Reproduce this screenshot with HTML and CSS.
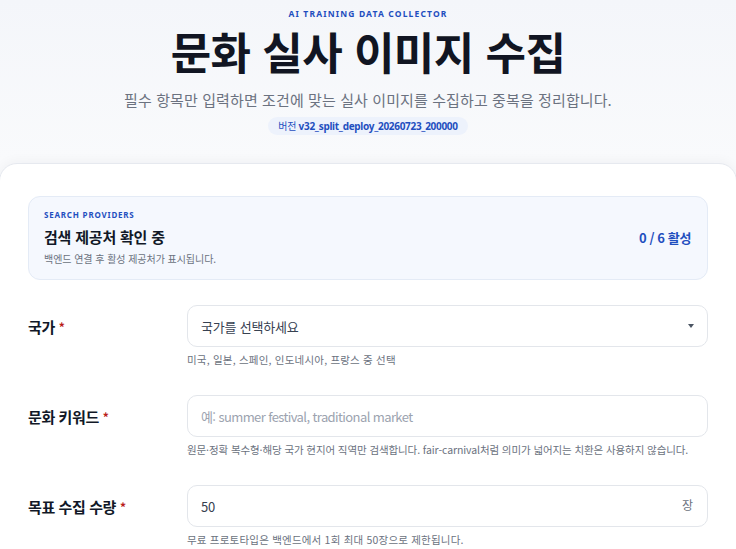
FILE: index.html
```html
<!DOCTYPE html>
<html lang="ko">
<head>
    <meta charset="UTF-8">
    <meta name="viewport" content="width=device-width, initial-scale=1.0">
    <title>문화 실사 이미지 수집</title>
    <link rel="stylesheet" href="styles.css">
</head>
<body>
    <header class="hero">
        <p class="eyebrow">AI TRAINING DATA COLLECTOR</p>
        <h1 class="hero_title">문화 실사 이미지 수집</h1>
        <p class="hero_sub">필수 항목만 입력하면 조건에 맞는 실사 이미지를 수집하고 중복을 정리합니다.</p>
        <span class="version">버전 <b>v32_split_deploy_20260723_200000</b></span>
    </header>

    <main class="panel">
        <section class="providers">
            <div class="providers_text">
                <p class="providers_kicker">SEARCH PROVIDERS</p>
                <h2 class="providers_title">검색 제공처 확인 중</h2>
                <p class="providers_note">백엔드 연결 후 활성 제공처가 표시됩니다.</p>
            </div>
            <span class="providers_count">0 / 6 활성</span>
        </section>

        <form id="collectForm" class="form">
            <div class="row">
                <label class="row_label" for="country">국가<span class="req">*</span></label>
                <div class="row_field">
                    <div class="select_wrap">
                        <select id="country" name="country" class="control">
                            <option value="">국가를 선택하세요</option>
                            <option value="us">미국</option>
                            <option value="jp">일본</option>
                            <option value="es">스페인</option>
                            <option value="id">인도네시아</option>
                            <option value="fr">프랑스</option>
                        </select>
                        <span class="caret"></span>
                    </div>
                    <p class="hint">미국, 일본, 스페인, 인도네시아, 프랑스 중 선택</p>
                </div>
            </div>

            <div class="row">
                <label class="row_label" for="keyword">문화 키워드<span class="req">*</span></label>
                <div class="row_field">
                    <input type="text" id="keyword" name="keyword" class="control latin" placeholder="예: summer festival, traditional market">
                    <p class="hint hint_long">원문·정확 복수형·해당 국가 현지어 직역만 검색합니다. fair-carnival처럼 의미가 넓어지는 치환은 사용하지 않습니다.</p>
                </div>
            </div>

            <div class="row">
                <label class="row_label" for="count">목표 수집 수량<span class="req">*</span></label>
                <div class="row_field">
                    <div class="unit_wrap">
                        <input type="text" id="count" name="count" class="control" value="50">
                        <span class="unit">장</span>
                    </div>
                    <p class="hint">무료 프로토타입은 백엔드에서 1회 최대 50장으로 제한됩니다.</p>
                </div>
            </div>
        </form>
    </main>
</body>
</html>
```
FILE: styles.css
```css
body{
    margin: 0;
    font-family: "Noto Sans CJK KR", "Noto Sans", sans-serif;
    background: linear-gradient(180deg, #f4f6fa 0%, #f9fafc 160px, #ffffff 100%);
    color: #111827;
}
p{
    margin: 0;
}

/* header */
.hero{
    display: flex;
    flex-direction: column;
    align-items: center;
    padding-top: 9px;
    height: 155px;
    box-sizing: border-box;
}
.eyebrow{
    font-family: "Noto Sans", sans-serif;
    font-size: 8.5px;
    font-weight: 700;
    letter-spacing: 1.15px;
    color: #1f4fbf;
    line-height: 10px;
}
.hero_title{
    margin: 8px 0 0;
    font-size: 44px;
    font-weight: 700;
    letter-spacing: -0.55px;
    line-height: 48px;
    color: #111522;
}
.hero_sub{
    margin-top: 14px;
    font-size: 15px;
    letter-spacing: 0.1px;
    color: #6b7280;
    line-height: 22px;
}
.version{
    margin-top: 6px;
    padding: 1px 10px;
    border-radius: 10px;
    background: #edf2fc;
    color: #1f4fbf;
    font-size: 10px;
    letter-spacing: -0.3px;
    line-height: 15px;
}
.version b{
    font-family: "Noto Sans", sans-serif;
    font-weight: 700;
}

/* main card */
.panel{
    background: #fff;
    border: 1px solid #e6e9ef;
    border-radius: 18px;
    margin: 8px -1px 0;
    padding: 32px 28px 40px;
    box-shadow: 0 -2px 12px rgba(15, 23, 42, 0.04);
}
.providers{
    display: flex;
    align-items: center;
    justify-content: space-between;
    background: #f5f8fe;
    border: 1px solid #e4ebf6;
    border-radius: 12px;
    padding: 12px 15px 13px;
}
.providers_kicker{
    font-family: "Noto Sans", sans-serif;
    font-size: 8px;
    font-weight: 700;
    letter-spacing: 0.8px;
    color: #1f4fbf;
    line-height: 12px;
}
.providers_title{
    margin: 6px 0 5px;
    font-size: 15px;
    font-weight: 700;
    letter-spacing: -0.2px;
    line-height: 20px;
    color: #111827;
}
.providers_note{
    font-size: 10px;
    letter-spacing: -0.05px;
    color: #6b7280;
    line-height: 14px;
}
.providers_count{
    font-size: 13px;
    font-weight: 700;
    letter-spacing: -0.4px;
    color: #1f4fbf;
    margin-right: 1px;
}

/* form */
.form{
    margin-top: 25px;
    display: flex;
    flex-direction: column;
    gap: 28px;
}
.row{
    display: grid;
    grid-template-columns: 159px 1fr;
}
.row_label{
    height: 42px;
    display: flex;
    align-items: center;
    font-size: 15px;
    font-weight: 700;
    letter-spacing: -0.4px;
    color: #111827;
}
.req{
    color: #b91c1c;
    margin-left: 4px;
    font-size: 12px;
}
.control{
    width: 100%;
    box-sizing: border-box;
    height: 42px;
    padding: 0 13px;
    border: 1px solid #e3e6eb;
    border-radius: 10px;
    background: #fff;
    font-family: "Noto Sans CJK KR", "Noto Sans", sans-serif;
    font-size: 13px;
    letter-spacing: -0.2px;
    color: #374151;
    outline: none;
}
.control.latin{
    letter-spacing: -0.6px;
}
.control::placeholder{
    color: #9ca3af;
}
select.control{
    appearance: none;
}
.select_wrap, .unit_wrap{
    position: relative;
}
.caret{
    position: absolute;
    right: 14px;
    top: 19px;
    border-left: 3.5px solid transparent;
    border-right: 3.5px solid transparent;
    border-top: 4px solid #4b5563;
}
.unit{
    position: absolute;
    right: 15px;
    top: 11px;
    font-size: 12px;
    color: #6b7280;
}
.hint{
    margin-top: 6px;
    font-size: 10.5px;
    letter-spacing: 0.2px;
    color: #6b7280;
    line-height: 14px;
}
.hint_long{
    letter-spacing: -0.1px;
}
```
